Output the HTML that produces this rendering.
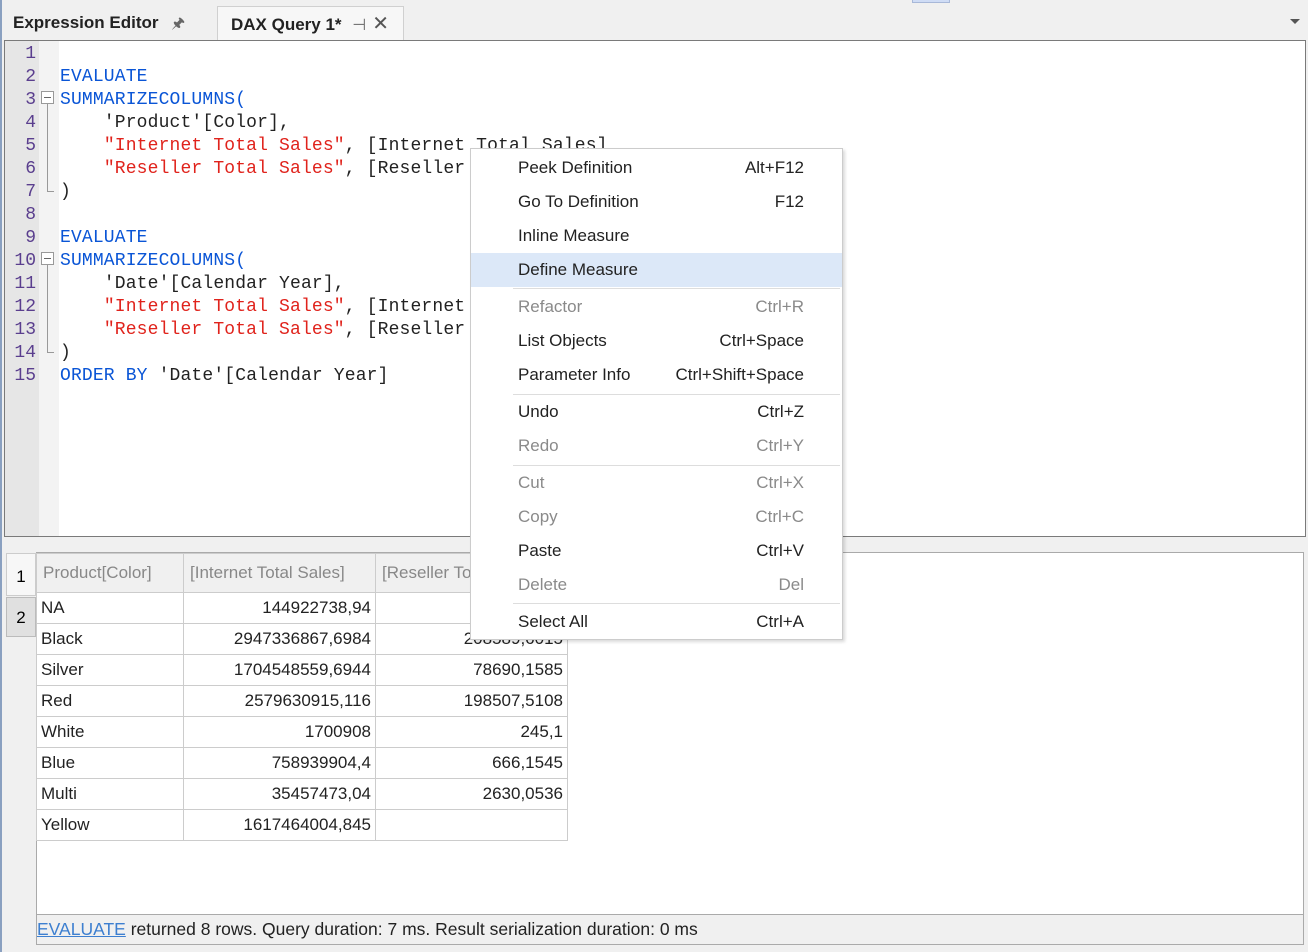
<!DOCTYPE html>
<html><head><style>
*{margin:0;padding:0;box-sizing:border-box}
body{width:1308px;height:952px;background:#f0f0f0;position:relative;overflow:hidden;font-family:"Liberation Sans",sans-serif}
.abs{position:absolute}
.tab{position:absolute;top:6px;height:34px;font-size:17px;font-weight:bold;color:#222;line-height:34px;padding-left:13px}
#editor{left:4px;top:40px;width:1302px;height:497px;background:#fff;border:1px solid #7a7a7a}
#gut{left:0;top:0;width:34px;height:495px;background:#e6e6e6}
#fold{left:34px;top:0;width:20px;height:495px;background:#f3f3f3}
.ln{position:absolute;left:0;width:31px;text-align:right;font:18px "Liberation Mono",monospace;color:#5a3e8e}
.code{position:absolute;left:55px;font:18px "Liberation Mono",monospace;color:#222;white-space:pre;letter-spacing:0.15px}
.k{color:#0a55d6}.s{color:#e0231c}
#menu{left:470px;top:148px;width:373px;height:492px;background:#fff;border:1px solid #ccc;box-shadow:2px 2px 3px rgba(0,0,0,.15)}
.mi{position:absolute;left:0;width:371px;height:34px;font-size:17px;line-height:34px;color:#222}
.mi span{position:absolute;left:47px}.mi b{position:absolute;right:38px;font-weight:normal}
.dis{color:#8a8a8a}
.sep{position:absolute;left:42px;right:2px;height:1px;background:#ddd}
#res{left:36px;top:552px;width:1268px;height:363px;background:#fff;border:1px solid #aaa}
table{border-collapse:collapse;position:absolute;left:36px;top:553px;font-size:17px}
td{border:1px solid #ccc;height:31px;padding:0 4px;color:#222}
th{border:1px solid #ccc;height:39px;padding:0 6px;font-weight:normal;color:#888;text-align:left;background:#f0f0f0}
td.r{text-align:right}
</style></head><body>
<div class="abs" style="left:912px;top:0;width:38px;height:3px;background:#cfdcf5;border:1px solid #a8b8d8;border-top:none"></div>
<div class="abs" style="left:0;top:0;width:2px;height:952px;background:#8aa0c0"></div>
<div class="tab" style="left:0;width:217px">Expression Editor <span style="font-weight:normal;color:#666;font-size:15px;margin-left:8px">&#x1F588;</span></div>
<div class="tab" style="left:217px;width:187px;background:#f7f7f7;border:1px solid #d0d0d0;border-bottom:none">DAX Query 1* <span style="font-weight:normal;color:#666;font-size:16px;margin-left:6px">⊣</span><span style="font-weight:normal;color:#555;font-size:20px;margin-left:6px">✕</span></div>
<div class="abs" style="left:1290px;top:19px;width:0;height:0;border-left:5px solid transparent;border-right:5px solid transparent;border-top:5px solid #555"></div>
<div id="editor" class="abs">
<div id="gut" class="abs"></div><div id="fold" class="abs"></div>
<div class="abs" style="left:36px;top:50px;width:13px;height:13px;border:1px solid #999;background:#fff"><div style="position:absolute;left:2px;top:5px;width:7px;height:1px;background:#666"></div></div>
<div class="abs" style="left:42px;top:63px;width:7px;height:88px;border-left:1px solid #999;border-bottom:1px solid #999"></div>
<div class="abs" style="left:36px;top:211px;width:13px;height:13px;border:1px solid #999;background:#fff"><div style="position:absolute;left:2px;top:5px;width:7px;height:1px;background:#666"></div></div>
<div class="abs" style="left:42px;top:224px;width:7px;height:88px;border-left:1px solid #999;border-bottom:1px solid #999"></div>
<div class="ln" style="top:3px">1</div><div class="ln" style="top:26px">2</div><div class="ln" style="top:49px">3</div><div class="ln" style="top:72px">4</div><div class="ln" style="top:95px">5</div><div class="ln" style="top:118px">6</div><div class="ln" style="top:141px">7</div><div class="ln" style="top:164px">8</div><div class="ln" style="top:187px">9</div><div class="ln" style="top:210px">10</div><div class="ln" style="top:233px">11</div><div class="ln" style="top:256px">12</div><div class="ln" style="top:279px">13</div><div class="ln" style="top:302px">14</div><div class="ln" style="top:325px">15</div>
<div class="code" style="top:26px"><span class="k">EVALUATE</span></div>
<div class="code" style="top:49px"><span class="k">SUMMARIZECOLUMNS(</span></div>
<div class="code" style="top:72px">    'Product'[Color],</div>
<div class="code" style="top:95px">    <span class="s">"Internet Total Sales"</span>, [Internet Total Sales]</div>
<div class="code" style="top:118px">    <span class="s">"Reseller Total Sales"</span>, [Reseller</div>
<div class="code" style="top:141px">)</div>
<div class="code" style="top:187px"><span class="k">EVALUATE</span></div>
<div class="code" style="top:210px"><span class="k">SUMMARIZECOLUMNS(</span></div>
<div class="code" style="top:233px">    'Date'[Calendar Year],</div>
<div class="code" style="top:256px">    <span class="s">"Internet Total Sales"</span>, [Internet</div>
<div class="code" style="top:279px">    <span class="s">"Reseller Total Sales"</span>, [Reseller</div>
<div class="code" style="top:302px">)</div>
<div class="code" style="top:325px"><span class="k">ORDER BY</span> 'Date'[Calendar Year]</div>
</div>
<div class="abs" style="left:6px;top:553px;width:30px;height:43px;background:#f7f7f7;border:1px solid #ccc;font-size:17px;text-align:center;line-height:46px">1</div>
<div class="abs" style="left:6px;top:597px;width:30px;height:40px;background:#e0e0e0;border:1px solid #bbb;font-size:17px;text-align:center;line-height:40px">2</div>
<div id="res" class="abs"></div>
<table>
<tr><th style="width:147px">Product[Color]</th><th style="width:192px">[Internet Total Sales]</th><th style="width:192px">[Reseller Total Sales]</th></tr>
<tr><td>NA</td><td class="r">144922738,94</td><td class="r"></td></tr>
<tr><td>Black</td><td class="r">2947336867,6984</td><td class="r">208589,6015</td></tr>
<tr><td>Silver</td><td class="r">1704548559,6944</td><td class="r">78690,1585</td></tr>
<tr><td>Red</td><td class="r">2579630915,116</td><td class="r">198507,5108</td></tr>
<tr><td>White</td><td class="r">1700908</td><td class="r">245,1</td></tr>
<tr><td>Blue</td><td class="r">758939904,4</td><td class="r">666,1545</td></tr>
<tr><td>Multi</td><td class="r">35457473,04</td><td class="r">2630,0536</td></tr>
<tr><td>Yellow</td><td class="r">1617464004,845</td><td class="r"></td></tr>
</table>
<div class="abs" style="left:36px;top:915px;width:1268px;height:30px;background:#f0f0f0;border:1px solid #aaa;border-top:none;font-size:17.5px;line-height:28px;color:#222;white-space:nowrap"><span style="color:#3d7fd0;text-decoration:underline">EVALUATE</span> returned 8 rows. Query duration: 7 ms. Result serialization duration: 0 ms</div>
<div id="menu" class="abs">
<div class="mi" style="top:2px"><span>Peek Definition</span><b>Alt+F12</b></div>
<div class="mi" style="top:36px"><span>Go To Definition</span><b>F12</b></div>
<div class="mi" style="top:70px"><span>Inline Measure</span></div>
<div class="mi" style="top:104px;background:#dce8f8"><span>Define Measure</span></div>
<div class="sep" style="top:139px"></div>
<div class="mi dis" style="top:141px"><span>Refactor</span><b>Ctrl+R</b></div>
<div class="mi" style="top:175px"><span>List Objects</span><b>Ctrl+Space</b></div>
<div class="mi" style="top:209px"><span>Parameter Info</span><b>Ctrl+Shift+Space</b></div>
<div class="sep" style="top:245px"></div>
<div class="mi" style="top:246px"><span>Undo</span><b>Ctrl+Z</b></div>
<div class="mi dis" style="top:280px"><span>Redo</span><b>Ctrl+Y</b></div>
<div class="sep" style="top:316px"></div>
<div class="mi dis" style="top:317px"><span>Cut</span><b>Ctrl+X</b></div>
<div class="mi dis" style="top:351px"><span>Copy</span><b>Ctrl+C</b></div>
<div class="mi" style="top:385px"><span>Paste</span><b>Ctrl+V</b></div>
<div class="mi dis" style="top:419px"><span>Delete</span><b>Del</b></div>
<div class="sep" style="top:454px"></div>
<div class="mi" style="top:456px"><span>Select All</span><b>Ctrl+A</b></div>
</div>
</body></html>
